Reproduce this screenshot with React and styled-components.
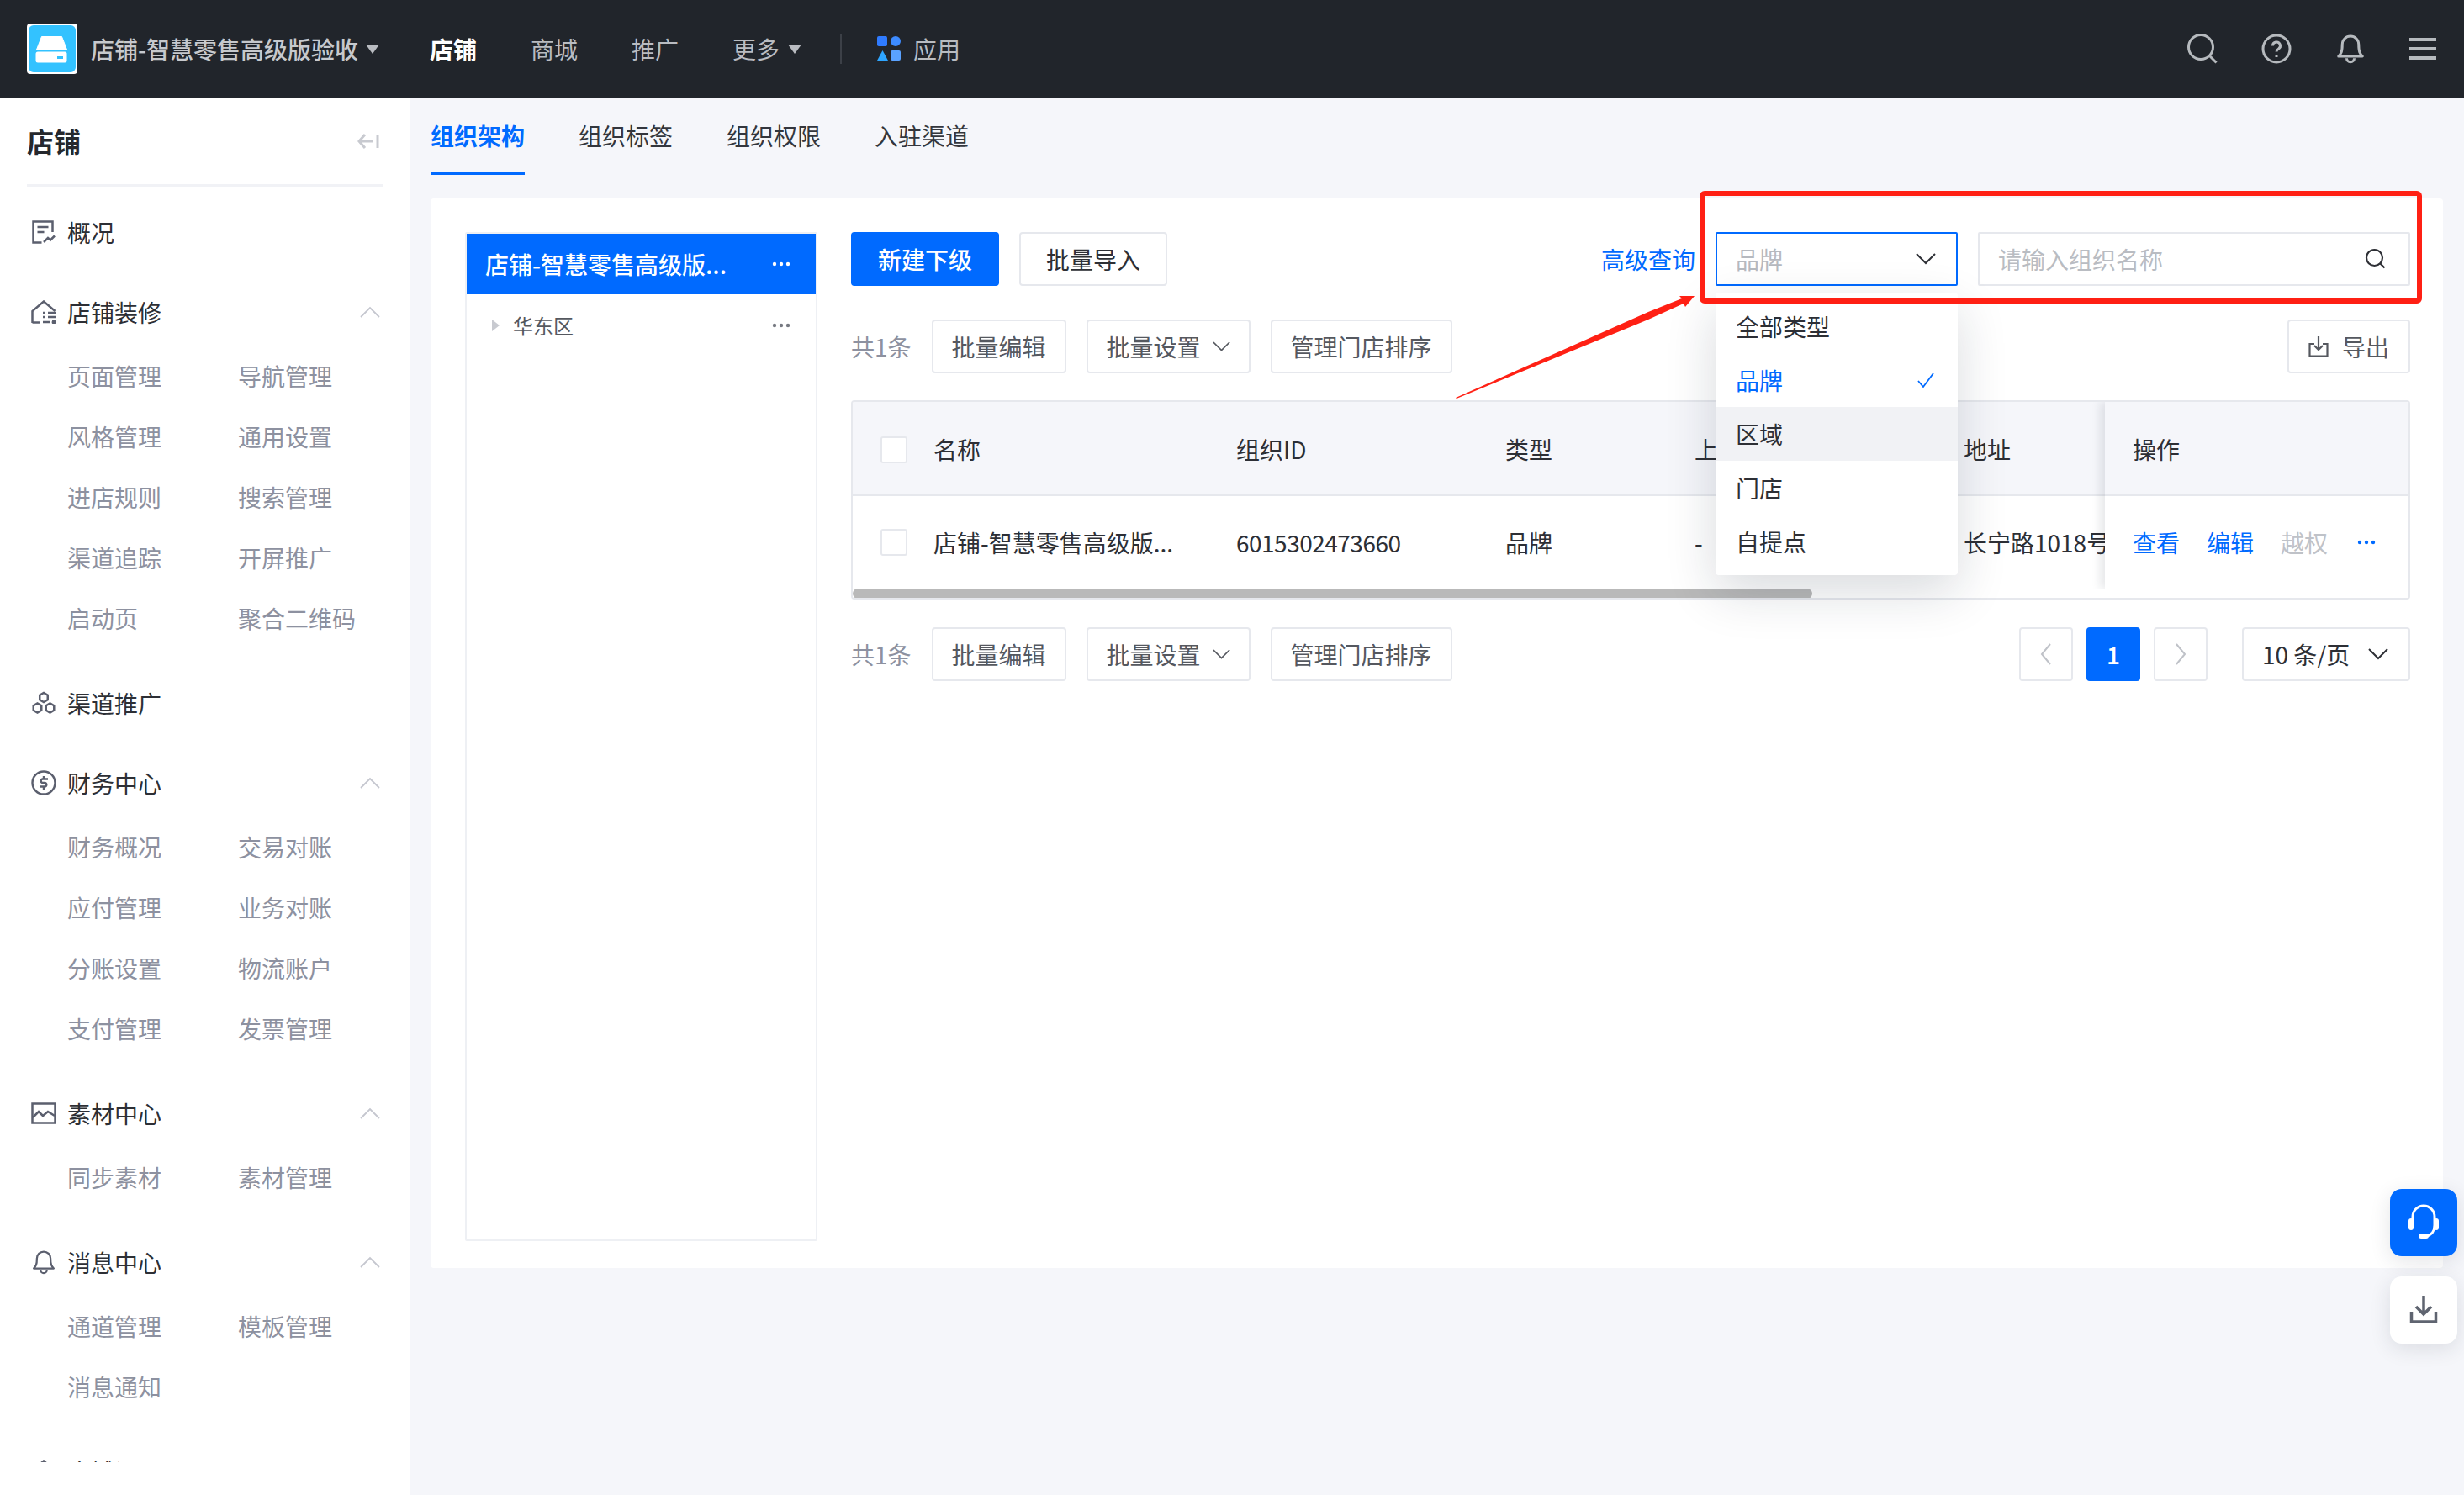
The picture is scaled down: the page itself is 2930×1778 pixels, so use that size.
import React from 'react';
import styled, { createGlobalStyle } from 'styled-components';

const blue = '#006aff';
const line = '#e6e8ed';

const GlobalStyle = createGlobalStyle`
  html, body {
    margin: 0;
    padding: 0;
    background: #f5f6fa;
    overflow: hidden;
  }
  * {
    box-sizing: border-box;
  }
  body, input, button {
    font-family: "Noto Sans CJK SC", "Noto Sans", sans-serif;
    font-size: 28px;
    line-height: 1.45;
  }
`;

const Page = styled.div`
  position: relative;
  width: 2930px;
  height: 1778px;
  display: flex;
  flex-direction: column;
  overflow: hidden;
`;

const TopBar = styled.header`
  height: 116px;
  flex: none;
  display: flex;
  align-items: center;
  padding: 0 33px 0 32px;
  background: #21252b;
  position: relative;
  z-index: 3;
`;

const LogoBox = styled.svg`
  width: 60px;
  height: 60px;
  flex: none;
`;

const Brand = styled.span`
  margin-left: 16px;
  color: #c6c9cd;
  font-weight: 500;
  white-space: nowrap;
`;

const Caret = styled.i`
  display: block;
  width: 0;
  height: 0;
  margin-left: ${(p) => p.$gap}px;
  border-left: 8px solid transparent;
  border-right: 8px solid transparent;
  border-top: 11px solid #b9bcc1;
`;

const TopNav = styled.nav`
  display: flex;
  align-items: center;
  gap: 64px;
  margin-left: 60px;
`;

const TopLink = styled.a`
  display: flex;
  align-items: center;
  color: ${(p) => (p.$active ? '#fff' : '#b9bcc1')};
  font-weight: ${(p) => (p.$active ? 700 : 400)};
`;

const TopDivider = styled.i`
  width: 2px;
  height: 36px;
  background: #3c4047;
  margin: 0 42px 0 46px;
`;

const AppLink = styled.a`
  display: flex;
  align-items: center;
  gap: 15px;
  color: #b9bcc1;
`;

const TopIcons = styled.div`
  margin-left: auto;
  display: flex;
  align-items: center;
  gap: 52px;
`;

const Body = styled.div`
  flex: 1;
  display: flex;
  min-height: 0;
`;

const Sidebar = styled.aside`
  width: 488px;
  flex: none;
  background: #fff;
  display: flex;
  flex-direction: column;
`;

const SideHead = styled.div`
  height: 106px;
  margin: 0 32px;
  flex: none;
  display: flex;
  align-items: center;
  justify-content: space-between;
  padding: 0 5px 0 0;
  border-bottom: 3px solid #f1f2f6;
`;

const SideTitle = styled.h2`
  margin: 0;
  font-size: 32px;
  font-weight: 700;
  color: #26282d;
`;

const SideNav = styled.div`
  height: 1517px;
  padding-top: 26px;
  overflow: hidden;
`;

const Group = styled.section`
  margin-bottom: 39px;
`;

const GroupHead = styled.div`
  height: 56px;
  display: flex;
  align-items: center;
  padding: 0 36px 0 32px;
  color: #2d2f35;
`;

const GroupIcon = styled.span`
  width: 40px;
  margin-right: 8px;
  flex: none;
  display: flex;
  justify-content: center;
`;

const GroupChevron = styled.span`
  margin-left: auto;
  display: flex;
`;

const SubGrid = styled.div`
  display: grid;
  grid-template-columns: 203px 1fr;
  grid-auto-rows: 72px;
  align-items: center;
  padding-left: 80px;
  margin: 12px 0 -2px;
  color: #8d91a0;
`;

const Main = styled.main`
  flex: 1;
  min-width: 0;
  padding: 0 25px 0 24px;
`;

const Tabs = styled.div`
  height: 92px;
  display: flex;
  gap: 64px;
`;

const Tab = styled.a`
  height: 92px;
  display: flex;
  align-items: center;
  padding-top: 2px;
  color: ${(p) => (p.$active ? blue : '#33363d')};
  font-weight: ${(p) => (p.$active ? 700 : 400)};
  border-bottom: 4px solid ${(p) => (p.$active ? blue : 'transparent')};
`;

const Card = styled.div`
  margin-top: 28px;
  height: 1272px;
  display: flex;
  gap: 40px;
  padding: 40px 39px 32px 41px;
  background: #fff;
  border-radius: 4px;
`;

const TreePanel = styled.div`
  width: 419px;
  flex: none;
  border: 2px solid #eef0f4;
  border-radius: 2px;
`;

const TreeRoot = styled.div`
  height: 72px;
  display: flex;
  align-items: center;
  justify-content: space-between;
  padding: 0 30px 0 22px;
  background: ${blue};
  color: #fff;
  font-weight: 500;
`;

const TreeRow = styled.div`
  height: 74px;
  display: flex;
  align-items: center;
  padding: 0 30px;
  color: #55585f;
  font-size: 24px;
`;

const TreeArrow = styled.i`
  width: 0;
  height: 0;
  border-top: 7px solid transparent;
  border-bottom: 7px solid transparent;
  border-left: 9px solid #c8cad0;
  margin-right: 16px;
`;

const TreeLabel = styled.span`
  flex: 1;
`;

const Content = styled.div`
  flex: 1;
  min-width: 0;
  display: flex;
  flex-direction: column;
`;

const ToolRow = styled.div`
  height: 64px;
  flex: none;
  display: flex;
  align-items: center;
  gap: 24px;
  margin-top: ${(p) => p.$top || 0}px;
`;

const Btn = styled.button`
  height: 64px;
  padding: 0 ${(p) => (p.$pad !== undefined ? p.$pad : 22)}px;
  display: flex;
  align-items: center;
  gap: ${(p) => p.$gap || 12}px;
  border: 2px solid ${(p) => (p.$primary ? blue : line)};
  border-radius: 4px;
  background: ${(p) => (p.$primary ? blue : '#fff')};
  color: ${(p) => (p.$primary ? '#fff' : p.$muted ? '#55585f' : '#2d2f35')};
  font-weight: ${(p) => (p.$primary ? 500 : 400)};
  white-space: nowrap;
`;

const Count = styled.span`
  color: #8d91a0;
  white-space: nowrap;
`;

const Push = styled.div`
  margin-left: auto;
  display: flex;
  align-items: center;
  gap: 24px;
`;

const TextLink = styled.a`
  color: ${(p) => (p.$off ? '#bfc2c8' : blue)};
  white-space: nowrap;
`;

const SelectWrap = styled.div`
  position: relative;
  width: 288px;
  z-index: 2;
`;

const SelectBox = styled.div`
  height: 64px;
  display: flex;
  align-items: center;
  justify-content: space-between;
  padding: 0 24px 0 22px;
  border: 2px solid ${blue};
  border-radius: 2px;
  background: #fff;
  color: #b6b9bf;
`;

const Menu = styled.ul`
  position: absolute;
  left: 0;
  top: 72px;
  width: 288px;
  margin: 0;
  padding: 8px 0;
  list-style: none;
  background: #fff;
  border-radius: 4px;
  box-shadow: 0 20px 60px rgba(20, 30, 50, 0.16);
`;

const MenuItem = styled.li`
  height: 64px;
  display: flex;
  align-items: center;
  justify-content: space-between;
  padding: 0 28px 0 24px;
  color: ${(p) => (p.$selected ? blue : '#2d2f35')};
  background: ${(p) => (p.$hover ? '#f1f2f5' : 'transparent')};
`;

const SearchBox = styled.label`
  width: 514px;
  height: 64px;
  display: flex;
  align-items: center;
  padding: 0 26px 0 22px;
  border: 2px solid ${line};
  border-radius: 2px;
`;

const SearchInput = styled.input`
  flex: 1;
  min-width: 0;
  border: 0;
  outline: 0;
  padding: 0;
  background: transparent;
  color: #2d2f35;
  &::placeholder {
    color: #b9bcc2;
    opacity: 1;
  }
`;

const TableBox = styled.div`
  margin-top: 32px;
  height: 237px;
  flex: none;
  border: 2px solid ${line};
  border-radius: 4px;
  overflow: hidden;
`;

const TableBody = styled.div`
  height: 222px;
  display: flex;
`;

const Columns = styled.div`
  flex: 1;
  min-width: 0;
  overflow: hidden;
`;

const TableRow = styled.div`
  height: ${(p) => (p.$head ? 112 : 110)}px;
  padding-top: ${(p) => (p.$head ? 4 : 0)}px;
  display: grid;
  grid-template-columns: 96px 360px 320px 225px 320px 168px;
  align-items: center;
  background: ${(p) => (p.$head ? '#f5f6fa' : '#fff')};
  border-bottom: ${(p) => (p.$head ? `3px solid ${line}` : '0')};
  color: #2d2f35;
`;

const Cell = styled.div`
  white-space: nowrap;
  overflow: hidden;
`;

const IdCell = styled(Cell)`
  letter-spacing: -0.5px;
`;

const CheckCell = styled.div`
  padding-left: 33px;
  display: flex;
`;

const CheckBox = styled.i`
  display: block;
  width: 32px;
  height: 32px;
  border: 2px solid ${line};
  border-radius: 3px;
  background: #fff;
`;

const FixedCol = styled.div`
  width: 361px;
  flex: none;
  box-shadow: -6px 0 10px rgba(30, 40, 60, 0.1);
  clip-path: inset(0 0 0 -20px);
  position: relative;
`;

const FixedHead = styled.div`
  height: 112px;
  padding-top: 4px;
  display: flex;
  align-items: center;
  padding-left: 33px;
  background: #f5f6fa;
  border-bottom: 3px solid ${line};
  color: #2d2f35;
`;

const FixedCell = styled.div`
  height: 110px;
  display: flex;
  align-items: center;
  gap: 32px;
  padding-left: 33px;
  background: #fff;
`;

const MoreSlot = styled.span`
  display: flex;
  margin-left: 2px;
`;

const ScrollTrack = styled.div`
  height: 12px;
  background: #fff;
`;

const ScrollThumb = styled.div`
  width: 1141px;
  height: 12px;
  border-radius: 6px;
  background: #b9b9b9;
`;

const PageBtn = styled.button`
  width: 64px;
  height: 64px;
  padding: 0;
  display: flex;
  align-items: center;
  justify-content: center;
  border: 2px solid ${(p) => (p.$current ? blue : line)};
  border-radius: 4px;
  background: ${(p) => (p.$current ? blue : '#fff')};
  color: #fff;
  font-weight: 500;
`;

const Pager = styled.div`
  margin-left: auto;
  display: flex;
  align-items: center;
  gap: 16px;
`;

const SizeSelect = styled.div`
  width: 200px;
  height: 64px;
  margin-left: 25px;
  display: flex;
  align-items: center;
  justify-content: space-between;
  padding: 0 24px 0 22px;
  border: 2px solid ${line};
  border-radius: 4px;
  color: #2d2f35;
  white-space: nowrap;
`;

const FloatBtn = styled.button`
  position: absolute;
  left: 2842px;
  top: ${(p) => p.$top}px;
  width: 80px;
  height: 80px;
  padding: 0;
  border: 0;
  border-radius: 14px;
  display: flex;
  background: ${(p) => (p.$primary ? blue : '#fff')};
  box-shadow: 0 6px 24px rgba(30, 40, 60, 0.12);
  z-index: 4;
`;

const RedBox = styled.div`
  position: absolute;
  left: 2021px;
  top: 227px;
  width: 859px;
  height: 134px;
  border: 6px solid #ff2014;
  border-radius: 6px;
  z-index: 5;
`;

const ArrowLayer = styled.svg`
  position: absolute;
  left: 0;
  top: 0;
  z-index: 5;
  pointer-events: none;
`;

const Logo = () => (
  <LogoBox viewBox="0 0 60 60">
    <rect width="60" height="60" rx="4" fill="#fff" />
    <rect x="2" y="2" width="56" height="56" rx="6" fill="#33c2ff" />
    <path d="M17.5 15.5h24L47.5 31h-36z" fill="#fff" strokeLinejoin="round" stroke="#fff" />
    <rect x="10.5" y="33.500" width="37" height="13" rx="2.500" fill="#fff" />
    <rect x="36" y="39" width="7" height="3" fill="#33c2ff" />
  </LogoBox>
);

const AppsIcon = () => (
  <svg width="28" height="30" viewBox="0 0 28 30">
    <rect x="0" y="0" width="12" height="12" rx="2" fill="#2f7bff" />
    <circle cx="22" cy="6" r="6" fill="#3d8bff" />
    <path d="M6.500 17L13 29H0z" fill="#2ea5ff" />
    <rect x="16" y="17" width="12" height="12" rx="2" fill="#5aa2ff" />
  </svg>
);

const TopSearch = () => (
  <svg width="36" height="36" viewBox="0 0 36 36" fill="none" stroke="#b6babe" strokeWidth="3">
    <circle cx="16" cy="16" r="14.500" />
    <path d="M26.500 26.500l8 8" />
  </svg>
);

const TopHelp = () => (
  <svg width="36" height="36" viewBox="0 0 36 36" fill="none" stroke="#b6babe" strokeWidth="3">
    <circle cx="18" cy="18" r="16" />
    <path d="M13.500 14.500a4.500 4.500 0 1 1 6.800 3.800c-1.500 1-2.300 1.800-2.300 3.200" />
    <path d="M18 25v3" />
  </svg>
);

const BellIcon = ({ size = 32, color = '#b6babe', width = 2 }) => (
  <svg width={size} height={size} viewBox="0 0 24 24" fill="none" stroke={color} strokeWidth={width}>
    <path d="M5.500 8.500a6.500 6.500 0 0 1 13 0c0 6 1 7.500 3 9.500H2.500c2-2 3-3.500 3-9.500z" strokeLinejoin="round" />
    <path d="M9 19.500a3 3 0 0 0 6 0" />
  </svg>
);

const MenuIcon = () => (
  <svg width="32" height="26" viewBox="0 0 32 26" fill="#b6babe">
    <rect y="0" width="32" height="4" />
    <rect y="11" width="32" height="4" />
    <rect y="22" width="32" height="4" />
  </svg>
);

const Collapse = () => (
  <svg width="26" height="18" viewBox="0 0 26 18" fill="none" stroke="#c8cad0" strokeWidth="3">
    <path d="M9 1L2 9l7 8" />
    <path d="M2 9h16" />
    <path d="M24 1v16" />
  </svg>
);

const OverviewIcon = () => (
  <svg width="28" height="28" viewBox="0 0 28 28" fill="none" stroke="#5b5f6e" strokeWidth="2.500">
    <path d="M24.500 14V1.500H1.500v25h10" />
    <path d="M6.500 8h13M6.500 14h8" />
    <path d="M14 26l5-5 3 2.500 5-5" />
  </svg>
);

const StoreIcon = () => (
  <svg width="30" height="28" viewBox="0 0 30 28" fill="none" stroke="#5b5f6e" strokeWidth="2.500">
    <path d="M1.500 27V13L15 1.500 28.500 13" />
    <path d="M1.500 26.500h9" />
    <path d="M14 15h2M20 15h9M14 20h2M20 20h9M14 26h9" />
    <circle cx="27" cy="26" r="1.200" fill="#5b5f6e" />
  </svg>
);

const hex = (cx, cy, r) =>
  [0, 1, 2, 3, 4, 5]
    .map((i) => {
      const a = (Math.PI / 3) * i + Math.PI / 6;
      return `${cx + r * Math.cos(a)},${cy + r * Math.sin(a)}`;
    })
    .join(' ');

const ChannelIcon = () => (
  <svg width="30" height="28" viewBox="0 0 30 28" fill="none" stroke="#5b5f6e" strokeWidth="2.500">
    <polygon points={hex(15, 7.500, 5.500)} />
    <polygon points={hex(7.500, 20, 5.500)} />
    <polygon points={hex(22.500, 20, 5.500)} />
  </svg>
);

const MoneyIcon = () => (
  <svg width="30" height="30" viewBox="0 0 30 30" fill="none" stroke="#5b5f6e" strokeWidth="2.400">
    <circle cx="15" cy="15" r="13.500" />
    <path d="M20 10.500h-6.500a2.300 2.300 0 0 0 0 4.500h3a2.300 2.300 0 0 1 0 4.500H10" />
    <path d="M15 7v3M15 20v3" />
  </svg>
);

const ImageIcon = () => (
  <svg width="30" height="26" viewBox="0 0 30 26" fill="none" stroke="#5b5f6e" strokeWidth="2.500">
    <rect x="1.500" y="1.500" width="27" height="23" />
    <path d="M2 18l7-7 5 5 6-5 8 5" />
  </svg>
);

const Chevron = ({ dir = 'down', w = 24, color = '#2d2f35', stroke = 2 }) => (
  <svg width={w} height={w / 2 + 2} viewBox="0 0 24 14" fill="none" stroke={color} strokeWidth={stroke}>
    <path d={dir === 'up' ? 'M1 13L12 2l11 11' : 'M1 1l11 11L23 1'} />
  </svg>
);

const Side = ({ dir }) => (
  <svg width="14" height="26" viewBox="0 0 14 26" fill="none" stroke="#bfc2c8" strokeWidth="2">
    <path d={dir === 'left' ? 'M12 1L2 13l10 12' : 'M2 1l10 12L2 25'} />
  </svg>
);

const Dots = ({ color, w = 22 }) => (
  <svg width={w} height="6" viewBox="0 0 22 6" fill={color}>
    <circle cx="3" cy="3" r="2.200" />
    <circle cx="11" cy="3" r="2.200" />
    <circle cx="19" cy="3" r="2.200" />
  </svg>
);

const TinySearch = () => (
  <svg width="26" height="26" viewBox="0 0 26 26" fill="none" stroke="#2d2f35" strokeWidth="2.200">
    <circle cx="11.500" cy="11.500" r="9.500" />
    <path d="M18.500 18.500l5 5" />
  </svg>
);

const CheckMark = () => (
  <svg width="20" height="18" viewBox="0 0 20 18" fill="none" stroke={blue} strokeWidth="1.800">
    <path d="M1 10l6 7L19 1" />
  </svg>
);

const ExportIcon = () => (
  <svg width="24" height="26" viewBox="0 0 24 26" fill="none" stroke="#55585f" strokeWidth="2.200">
    <path d="M7 10H1.500v14.500h21V10H17" />
    <path d="M12 1v16M7 12l5 5 5-5" />
  </svg>
);

const Headset = () => (
  <svg width="80" height="80" viewBox="0 0 80 80" fill="none" stroke="#fff" strokeWidth="3">
    <path d="M27 38v-5a13 13 0 0 1 26 0v10c0 6-3 12-10 13" />
    <rect x="22" y="35" width="6" height="14" rx="3" fill="#fff" stroke="none" />
    <rect x="52" y="35" width="6" height="14" rx="3" fill="#fff" stroke="none" />
    <rect x="34" y="53" width="12" height="6" rx="3" fill="#fff" stroke="none" />
  </svg>
);

const Save = () => (
  <svg width="80" height="80" viewBox="0 0 80 80" fill="none" stroke="#5f6470" strokeWidth="3.500">
    <path d="M40 23v22M31 36l9 9 9-9" />
    <path d="M25.500 42v12h29V42" />
  </svg>
);

const menuGroups = [
  { name: '概况', icon: <OverviewIcon /> },
  {
    name: '店铺装修',
    icon: <StoreIcon />,
    items: ['页面管理', '导航管理', '风格管理', '通用设置', '进店规则', '搜索管理', '渠道追踪', '开屏推广', '启动页', '聚合二维码'],
  },
  { name: '渠道推广', icon: <ChannelIcon /> },
  {
    name: '财务中心',
    icon: <MoneyIcon />,
    items: ['财务概况', '交易对账', '应付管理', '业务对账', '分账设置', '物流账户', '支付管理', '发票管理'],
  },
  { name: '素材中心', icon: <ImageIcon />, items: ['同步素材', '素材管理'] },
  {
    name: '消息中心',
    icon: <BellIcon size={30} color="#5b5f6e" width={1.800} />,
    items: ['通道管理', '模板管理', '消息通知'],
  },
  { name: '店铺设置', icon: <StoreIcon /> },
];

const typeOptions = ['全部类型', '品牌', '区域', '门店', '自提点'];

const BatchButtons = () => (
  <>
    <Count>共1条</Count>
    <Btn $muted>批量编辑</Btn>
    <Btn $muted $gap={14}>
      批量设置
      <Chevron w={21} color="#55585f" />
    </Btn>
    <Btn $muted>管理门店排序</Btn>
  </>
);

const App = () => (
  <Page>
    <GlobalStyle />
    <TopBar>
      <Logo />
      <Brand>店铺-智慧零售高级版验收</Brand>
      <Caret $gap={9} />
      <TopNav>
        <TopLink $active>店铺</TopLink>
        <TopLink>商城</TopLink>
        <TopLink>推广</TopLink>
        <TopLink>
          更多
          <Caret $gap={10} />
        </TopLink>
      </TopNav>
      <TopDivider />
      <AppLink>
        <AppsIcon />
        应用
      </AppLink>
      <TopIcons>
        <TopSearch />
        <TopHelp />
        <BellIcon size={36} width={2} />
        <MenuIcon />
      </TopIcons>
    </TopBar>
    <Body>
      <Sidebar>
        <SideHead>
          <SideTitle>店铺</SideTitle>
          <Collapse />
        </SideHead>
        <SideNav>
          {menuGroups.map((group) => (
            <Group key={group.name}>
              <GroupHead>
                <GroupIcon>{group.icon}</GroupIcon>
                {group.name}
                {group.items && (
                  <GroupChevron>
                    <Chevron dir="up" color="#c5c7cf" stroke={1.800} />
                  </GroupChevron>
                )}
              </GroupHead>
              {group.items && (
                <SubGrid>
                  {group.items.map((item) => (
                    <span key={item}>{item}</span>
                  ))}
                </SubGrid>
              )}
            </Group>
          ))}
        </SideNav>
      </Sidebar>
      <Main>
        <Tabs>
          <Tab $active>组织架构</Tab>
          <Tab>组织标签</Tab>
          <Tab>组织权限</Tab>
          <Tab>入驻渠道</Tab>
        </Tabs>
        <Card>
          <TreePanel>
            <TreeRoot>
              店铺-智慧零售高级版...
              <Dots color="#fff" />
            </TreeRoot>
            <TreeRow>
              <TreeArrow />
              <TreeLabel>华东区</TreeLabel>
              <Dots color="#777a82" />
            </TreeRow>
          </TreePanel>
          <Content>
            <ToolRow>
              <Btn $primary $pad={30}>新建下级</Btn>
              <Btn $pad={30}>批量导入</Btn>
              <Push>
                <TextLink>高级查询</TextLink>
                <SelectWrap>
                  <SelectBox>
                    品牌
                    <Chevron />
                  </SelectBox>
                  <Menu>
                    {typeOptions.map((option) => (
                      <MenuItem key={option} $selected={option === '品牌'} $hover={option === '区域'}>
                        {option}
                        {option === '品牌' && <CheckMark />}
                      </MenuItem>
                    ))}
                  </Menu>
                </SelectWrap>
                <SearchBox>
                  <SearchInput placeholder="请输入组织名称" readOnly />
                  <TinySearch />
                </SearchBox>
              </Push>
            </ToolRow>
            <ToolRow $top={40}>
              <BatchButtons />
              <Push>
                <Btn $muted $gap={16} $pad={23}>
                  <ExportIcon />
                  导出
                </Btn>
              </Push>
            </ToolRow>
            <TableBox>
              <TableBody>
                <Columns>
                  <TableRow $head>
                    <CheckCell>
                      <CheckBox />
                    </CheckCell>
                    <Cell>名称</Cell>
                    <Cell>组织ID</Cell>
                    <Cell>类型</Cell>
                    <Cell>上级组织</Cell>
                    <Cell>地址</Cell>
                  </TableRow>
                  <TableRow>
                    <CheckCell>
                      <CheckBox />
                    </CheckCell>
                    <Cell>店铺-智慧零售高级版...</Cell>
                    <IdCell>6015302473660</IdCell>
                    <Cell>品牌</Cell>
                    <Cell>-</Cell>
                    <Cell>长宁路1018号</Cell>
                  </TableRow>
                </Columns>
                <FixedCol>
                  <FixedHead>操作</FixedHead>
                  <FixedCell>
                    <TextLink>查看</TextLink>
                    <TextLink>编辑</TextLink>
                    <TextLink $off>越权</TextLink>
                    <MoreSlot>
                      <Dots color={blue} w={24} />
                    </MoreSlot>
                  </FixedCell>
                </FixedCol>
              </TableBody>
              <ScrollTrack>
                <ScrollThumb />
              </ScrollTrack>
            </TableBox>
            <ToolRow $top={33}>
              <BatchButtons />
              <Pager>
                <PageBtn>
                  <Side dir="left" />
                </PageBtn>
                <PageBtn $current>1</PageBtn>
                <PageBtn>
                  <Side dir="right" />
                </PageBtn>
                <SizeSelect>
                  10 条/页
                  <Chevron />
                </SizeSelect>
              </Pager>
            </ToolRow>
          </Content>
        </Card>
      </Main>
    </Body>
    <FloatBtn $primary $top={1414}>
      <Headset />
    </FloatBtn>
    <FloatBtn $top={1518}>
      <Save />
    </FloatBtn>
    <RedBox />
    <ArrowLayer width="2930" height="1778" viewBox="0 0 2930 1778">
      <polygon
        points="1731,473 1960,371 2000,355 1997,352 2015,352 2004,365 2002,361 1960,380 1732,474"
        fill="#ff2014"
      />
    </ArrowLayer>
  </Page>
);

export default App;
